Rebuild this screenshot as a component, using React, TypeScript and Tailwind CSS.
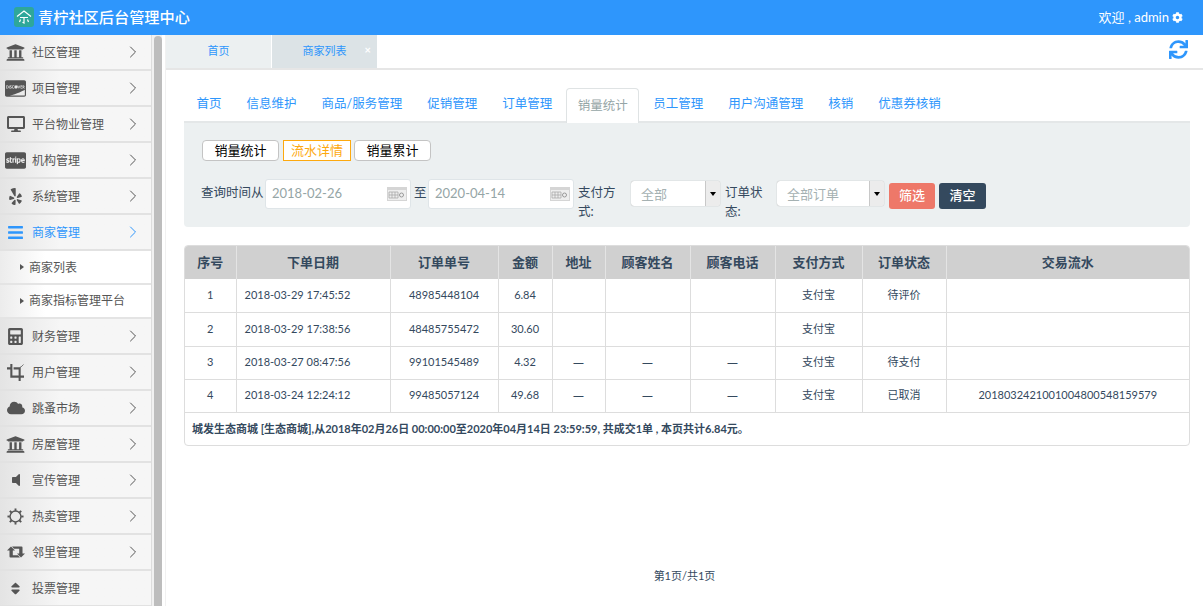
import type { ComponentType, ReactNode } from "react";
import { ChevronRight } from "lucide-react";
import {
  FaBars,
  FaCalculator,
  FaCcDiscover,
  FaCcStripe,
  FaCloud,
  FaCog,
  FaDesktop,
  FaSort,
  FaSync,
  FaUniversity,
  FaVolumeOff,
  FaYelp,
} from "react-icons/fa";

type Icon = ComponentType<{ className?: string }>;

function CropIcon({ className }: { className?: string }) {
  return (
    <svg viewBox="0 0 18 18" width="17" height="17" fill="currentColor" className={className}>
      <path d="M3.500 0h2.200v12.300H18v2.200h-3.500V18h-2.200v-3.500H3.500V5.700H0V3.500h3.500zM7 3.500h6.500l1-1v9.800h-2.200V5.700H7z" />
      <path d="M14.500 3.500 17.500 0.500" stroke="currentColor" strokeWidth="0.800" />
    </svg>
  );
}

function SunRingIcon({ className }: { className?: string }) {
  const dots = [0, 45, 90, 135, 180, 225, 270, 315];
  return (
    <svg viewBox="0 0 18 18" width="17" height="17" fill="currentColor" className={className}>
      <circle cx="9" cy="9" r="5.800" fill="none" stroke="currentColor" strokeWidth="1.500" />
      {dots.map((d) => (
        <rect key={d} x="8" y="0.500" width="2" height="2.500" transform={`rotate(${d} 9 9)`} />
      ))}
    </svg>
  );
}

function RetweetIcon({ className }: { className?: string }) {
  return (
    <svg viewBox="0 0 18 12" width="18" height="12" fill="currentColor" className={className}>
      <path d="M4 .5 8 4.500H5.800V9.300H11L13 11.500H3.500Q2.500 11.500 2.500 10.500V4.500H0Z" />
      <path d="M14 11.500 10 7.500H12.200V2.700H7L5 .5H14.500Q15.500 .5 15.500 1.500V7.500H18Z" />
    </svg>
  );
}

const topMenu: [string, Icon, string][] = [
  ["社区管理", FaUniversity, "text-[19px]"],
  ["项目管理", FaCcDiscover, "text-[21px]"],
  ["平台物业管理", FaDesktop, "text-[18px]"],
  ["机构管理", FaCcStripe, "text-[21px]"],
  ["系统管理", FaYelp, "text-[17px]"],
];

const bottomMenu: [string, Icon, string, boolean][] = [
  ["财务管理", FaCalculator, "text-[17px]", true],
  ["用户管理", CropIcon, "", true],
  ["跳蚤市场", FaCloud, "text-[18px]", true],
  ["房屋管理", FaUniversity, "text-[19px]", true],
  ["宣传管理", FaVolumeOff, "text-[16px]", true],
  ["热卖管理", SunRingIcon, "", true],
  ["邻里管理", RetweetIcon, "", true],
  ["投票管理", FaSort, "text-[15px]", false],
];

const navTabs = ["首页", "信息维护", "商品/服务管理", "促销管理", "订单管理", "销量统计", "员工管理", "用户沟通管理", "核销", "优惠券核销"];

const columns: [string, string][] = [
  ["序号", "w-[51px]"],
  ["下单日期", "w-[154px]"],
  ["订单单号", "w-[108px]"],
  ["金额", "w-[54px]"],
  ["地址", "w-[53px]"],
  ["顾客姓名", "w-[85px]"],
  ["顾客电话", "w-[85px]"],
  ["支付方式", "w-[87px]"],
  ["订单状态", "w-[84px]"],
  ["交易流水", ""],
];

const rows = [
  ["1", "2018-03-29 17:45:52", "48985448104", "6.84", "", "", "", "支付宝", "待评价", ""],
  ["2", "2018-03-29 17:38:56", "48485755472", "30.60", "", "", "", "支付宝", "", ""],
  ["3", "2018-03-27 08:47:56", "99101545489", "4.32", "—", "—", "—", "支付宝", "待支付", ""],
  ["4", "2018-03-24 12:24:12", "99485057124", "49.68", "—", "—", "—", "支付宝", "已取消", "2018032421001004800548159579"],
];

function MenuRow({ label, icon: Ico, size, chevron = true, active = false }: { label: string; icon: Icon; size: string; chevron?: boolean; active?: boolean }) {
  return (
    <div className={`flex h-[36px] items-center border-b-2 border-[#e2e2e2] bg-gradient-to-r from-[#e4e4e4] to-[#f6f6f6] to-40% ${active ? "text-[#2e96fc]" : "text-[#555]"}`}>
      <span className="flex w-[31px] shrink-0 justify-center">
        <Ico className={size} />
      </span>
      <span className="ml-px flex-1 pt-[2px] text-[12px]">{label}</span>
      {chevron && <ChevronRight className="mr-[8px] h-[20px] w-[20px]" strokeWidth={1.2} />}
    </div>
  );
}

function SubRow({ children, first = false }: { children: ReactNode; first?: boolean }) {
  return (
    <div className="flex h-[34px] items-center border-b-2 border-[#e4e4e4] bg-gradient-to-r from-[#ececec] to-white to-30% pl-[20px] text-[12px] text-[#555]">
      <span className="mr-[5px] h-0 w-0 border-y-[3px] border-l-[4px] border-y-transparent border-l-[#555]" />
      <span className={first ? "pt-[2px]" : ""}>{children}</span>
    </div>
  );
}

function CalendarIcon() {
  return (
    <svg width="20" height="14" viewBox="0 0 20 14" className="shrink-0">
      <rect width="20" height="14" fill="#d5d5d5" />
      <rect x="1" y="3" width="18" height="10" fill="#eeeeee" />
      <path d="M2 5h9v6H2zM5 5v6M8 5v6M2 8h9" fill="none" stroke="#aaa" strokeWidth="0.8" />
      <circle cx="14.5" cy="8" r="2" fill="none" stroke="#999" />
    </svg>
  );
}

function DateField({ value }: { value: string }) {
  return (
    <div className="flex h-[30px] w-[146px] items-center justify-between rounded-[3px] border border-[#dfe5e8] bg-white pl-[6px] pr-[3px] text-[13px] text-[#95a5a6]">
      {value}
      <CalendarIcon />
    </div>
  );
}

function SelectField({ value, width }: { value: string; width: string }) {
  return (
    <div className={`flex h-[25px] ${width} items-stretch overflow-hidden rounded-[3px] bg-white text-[13px] text-[#a5b1b2] shadow-[0_0_1px_#8a8a8a]`}>
      <span className="flex flex-1 items-center pl-[10px] pt-[2px]">{value}</span>
      <span className="flex w-[15px] items-center justify-center border-l border-[#c8c8c8] bg-[#ececec]">
        <span className="h-0 w-0 border-x-[3.5px] border-t-[4px] border-x-transparent border-t-black" />
      </span>
    </div>
  );
}

function LogoMark() {
  return (
    <svg width="20" height="20" viewBox="0 0 20 20" className="shrink-0">
      <rect width="20" height="20" rx="3" fill="#2ea79a" />
      <path d="M3 9.500 10 4l7 5.500M6 10.500h8M10 10.500V16l-1.500-0.800M6.500 12.500 5.500 15M13.500 12.500l1 2.500" fill="none" stroke="#fff" strokeWidth="1.200" />
    </svg>
  );
}

export default function App() {
  return (
    <div className="flex h-[606px] w-full flex-col overflow-hidden bg-white font-['Lato','Noto_Sans_CJK_SC',sans-serif] text-[#34495e]">
      <header className="flex h-[35px] shrink-0 items-center justify-between bg-[#2e96fc] pl-[14px] pr-[20px] text-white">
        <div className="flex items-center gap-[4px] text-[15.200px] font-medium">
          <LogoMark />
          青柠社区后台管理中心
        </div>
        <div className="flex items-center gap-[3px] text-[13px]">
          欢迎 , admin
          <FaCog className="text-[11px]" />
        </div>
      </header>

      <div className="flex min-h-0 flex-1">
        <aside className="w-[152px] shrink-0 overflow-hidden border-r border-[#ddd] bg-white">
          {topMenu.map(([label, icon, size]) => (
            <MenuRow key={label} label={label} icon={icon} size={size} />
          ))}
          <MenuRow label="商家管理" icon={FaBars} size="text-[17px]" active />
          <SubRow first>商家列表</SubRow>
          <SubRow>商家指标管理平台</SubRow>
          {bottomMenu.map(([label, icon, size, chevron]) => (
            <MenuRow key={label} label={label} icon={icon} size={size} chevron={chevron} />
          ))}
        </aside>

        <div className="flex w-[14px] shrink-0 bg-[#f1f1f1] pl-[2px]">
          <div className="mt-[1px] h-full w-[8px] rounded-t-[4px] bg-[#bdbdbd]" />
          <div className="w-[3px] bg-white" />
        </div>

        <main className="flex min-w-0 flex-1 flex-col">
          <div className="flex h-[35px] shrink-0 items-stretch border-b-2 border-[#e6e6e6] text-[11px] text-[#2e96fc]">
            <div className="flex w-[105px] items-center justify-center bg-[#ecf0f1]">首页</div>
            <div className="relative ml-px flex w-[105px] items-center justify-center bg-[#dce3e6]">
              商家列表
              <span className="absolute right-[6px] top-[9px] text-[11px] font-bold leading-none text-white">×</span>
            </div>
            <div className="flex flex-1 items-start justify-end pr-[15px] pt-[5px]">
              <FaSync className="text-[19px]" />
            </div>
          </div>

          <div className="flex flex-1 flex-col pl-[18px] pr-[13px]">
            <nav className="mt-[17px] flex h-[36px] shrink-0 items-end border-b-2 border-[#e4e7e8] text-[12.500px] text-[#2e96fc]">
              {navTabs.map((tab) => (
                <div
                  key={tab}
                  className={
                    tab === "销量统计"
                      ? "mx-[1.500px] mb-[-2px] flex h-[35px] items-center rounded-t-[4px] border border-b-0 border-[#dfe3e4] bg-white px-[10.500px] text-[#95a5a6]"
                      : "flex h-[34px] items-center px-[12.500px]"
                  }
                >
                  {tab}
                </div>
              ))}
            </nav>

            <section className="flex h-[104px] shrink-0 flex-col gap-[18px] rounded-b-[4px] bg-[#ecf0f1] pl-[18px] pt-[17px]">
              <div className="flex gap-[3px] text-[13px] leading-none">
                <button className="h-[21px] w-[77px] rounded-[4px] border border-[#c4c4c4] bg-white text-black">销量统计</button>
                <button className="ml-[1px] h-[21px] w-[68px] border border-[#fda90f] bg-white text-[#fda90f]">流水详情</button>
                <button className="h-[21px] w-[77px] rounded-[4px] border border-[#c4c4c4] bg-white text-black">销量累计</button>
              </div>
              <div className="-ml-px flex items-start text-[12.500px]">
                <span className="mt-[5px] w-[64px]">查询时间从</span>
                <DateField value="2018-02-26" />
                <span className="mx-[3px] mt-[5px] w-[11px]">至</span>
                <DateField value="2020-04-14" />
                <span className="ml-[4px] mt-[5px] w-[53px]">支付方式:</span>
                <div className="mt-[2px]">
                  <SelectField value="全部" width="w-[89px]" />
                </div>
                <span className="ml-[5px] mt-[5px] w-[52px]">订单状态:</span>
                <div className="mt-[2px]">
                  <SelectField value="全部订单" width="w-[107px]" />
                </div>
                <button className="ml-[5px] mt-[4px] h-[26px] w-[46px] rounded-[3px] bg-[#ee7869] text-[13px] font-medium text-white">筛选</button>
                <button className="ml-[4px] mt-[4px] h-[26px] w-[47px] rounded-[3px] bg-[#34495e] text-[13px] font-medium text-white">清空</button>
              </div>
            </section>

            <div className="mt-[18px] overflow-hidden rounded-[4px] border border-[#dddddd]">
              <table className="w-full table-fixed border-collapse text-center text-[11px] text-[#34495e]">
                <thead>
                  <tr className="h-[33px] bg-[#d0d0d0] text-[13px]">
                    {columns.map(([label, w]) => (
                      <th key={label} className={`border-r border-[#e4e4e4] font-bold last:border-r-0 ${w}`}>
                        {label}
                      </th>
                    ))}
                  </tr>
                </thead>
                <tbody>
                  {rows.map((row, r) => (
                    <tr key={row[0]} className={`border-b border-[#dddddd] ${r === 1 ? "h-[34px]" : "h-[33px]"}`}>
                      {row.map((cell, i) => (
                        <td
                          key={i}
                          className={`border-r border-[#dddddd] last:border-r-0 ${i === 1 ? "pl-[8px] text-left" : ""} ${cell === "—" ? "text-[15px]" : ""}`}
                        >
                          {cell}
                        </td>
                      ))}
                    </tr>
                  ))}
                  <tr className="h-[33px]">
                    <td colSpan={10} className="pl-[7px] text-left text-[11px] font-bold">
                      城发生态商城 [生态商城],从2018年02月26日 00:00:00至2020年04月14日 23:59:59, 共成交1单 , 本页共计6.84元。
                    </td>
                  </tr>
                </tbody>
              </table>
            </div>

            <p className="mt-[122px] text-center text-[11px] text-[#34495e] pr-[5px]">第1页/共1页</p>
          </div>
        </main>
      </div>
    </div>
  );
}
